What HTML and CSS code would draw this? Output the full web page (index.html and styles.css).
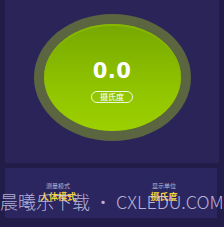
FILE: index.html
```html
<!DOCTYPE html>
<html lang="zh">
<head>
<meta charset="utf-8">
<link rel="stylesheet" href="styles.css">
</head>
<body>
<div class="page">
  <section class="top-card">
    <div class="gauge-ring">
      <div class="gauge">
        <div class="value">0.0</div>
        <div class="unit-pill">摄氏度</div>
      </div>
    </div>
  </section>
  <section class="info-card">
    <div class="info-col">
      <div class="info-label">测量模式</div>
      <div class="info-value">人体模式</div>
    </div>
    <div class="info-col">
      <div class="info-label">显示单位</div>
      <div class="info-value">摄氏度</div>
    </div>
  </section>
  <div class="watermark">晨曦乐下载 • CXLEDU.COM</div>
</div>
</body>
</html>
```
FILE: styles.css
```css
html, body {
  margin: 0;
  padding: 0;
  background: #221c49;
  font-family: "Noto Sans CJK SC", "Noto Sans", sans-serif;
}
.page {
  position: relative;
  width: 224px;
  height: 227px;
  overflow: hidden;
  display: flex;
  flex-direction: column;
  gap: 5px;
}
.top-card {
  margin: 0 5px;
  height: 163px;
  background: #2a2458;
  display: flex;
  justify-content: center;
  padding-top: 14px;
  box-sizing: border-box;
}
.gauge-ring {
  width: 157px;
  height: 127px;
  border-radius: 50%;
  background: #5b6540;
  padding: 10px;
  box-sizing: border-box;
}
.gauge {
  width: 100%;
  height: 100%;
  border-radius: 50%;
  background: linear-gradient(#76a800, #90c400 60%, #9dd000);
  box-shadow: inset 0 2px 0 #86b800;
  display: flex;
  flex-direction: column;
  align-items: center;
  padding-top: 36px;
  box-sizing: border-box;
}
.value {
  color: #ffffff;
  font-family: "DejaVu Sans", "Noto Sans", sans-serif;
  font-weight: bold;
  font-size: 21px;
  line-height: 22px;
  letter-spacing: 0.5px;
}
.unit-pill {
  margin-top: 9px;
  border: 1px solid rgba(255,255,255,0.85);
  border-radius: 7px;
  color: #ffffff;
  font-size: 8px;
  line-height: 10px;
  padding: 0 8px;
}
.info-card {
  margin: 0 7px 0 5px;
  height: 50px;
  background: #2c2660;
  display: flex;
}
.info-col {
  flex: 1;
  display: flex;
  flex-direction: column;
  align-items: center;
  padding-top: 14px;
  gap: 3px;
}
.info-label {
  color: #b9b6cf;
  font-size: 6px;
  line-height: 7px;
}
.info-value {
  color: #f2d23a;
  font-size: 9px;
  line-height: 10px;
  font-weight: bold;
}
.watermark {
  position: absolute;
  left: 0;
  top: 189px;
  white-space: nowrap;
  font-family: "Noto Sans CJK SC", "Liberation Sans", sans-serif;
  font-weight: 300;
  font-size: 18px;
  line-height: 24px;
  color: rgba(210, 205, 236, 0.85);
}
```
